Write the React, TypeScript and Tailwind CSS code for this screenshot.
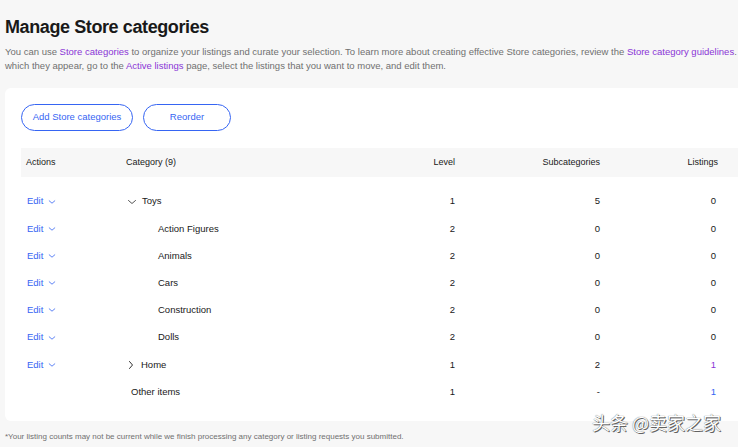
import type { ReactNode } from 'react';

type Row = {
  name: string;
  level: string;
  subs: string;
  listings: string;
  depth: 'parent' | 'child' | 'plain';
  open?: boolean;
  edit: boolean;
  listingsTone?: 'purple' | 'blue';
};

const rows: Row[] = [
  { name: 'Toys', level: '1', subs: '5', listings: '0', depth: 'parent', open: true, edit: true },
  { name: 'Action Figures', level: '2', subs: '0', listings: '0', depth: 'child', edit: true },
  { name: 'Animals', level: '2', subs: '0', listings: '0', depth: 'child', edit: true },
  { name: 'Cars', level: '2', subs: '0', listings: '0', depth: 'child', edit: true },
  { name: 'Construction', level: '2', subs: '0', listings: '0', depth: 'child', edit: true },
  { name: 'Dolls', level: '2', subs: '0', listings: '0', depth: 'child', edit: true },
  { name: 'Home', level: '1', subs: '2', listings: '1', depth: 'parent', open: false, edit: true, listingsTone: 'purple' },
  { name: 'Other items', level: '1', subs: '-', listings: '1', depth: 'plain', edit: false, listingsTone: 'blue' },
];

function Chevron({ dir, className }: { dir: 'down' | 'right'; className?: string }) {
  return (
    <svg viewBox="0 0 10 10" className={className} fill="none" stroke="currentColor" strokeWidth="1" strokeLinecap="round" strokeLinejoin="round">
      {dir === 'down' ? <polyline points="1.5,3.5 5,6.5 8.5,3.5" /> : <polyline points="3.5,1.5 6.5,5 3.5,8.5" />}
    </svg>
  );
}

function Link({ children }: { children: ReactNode }) {
  return <span className="text-[#8a35d6]">{children}</span>;
}

function CategoryCell({ row }: { row: Row }) {
  if (row.depth === 'child') {
    return <span className="pl-[37px]">{row.name}</span>;
  }
  if (row.depth === 'plain') {
    return <span className="pl-[10px]">{row.name}</span>;
  }
  return (
    <span className="flex items-center">
      {row.open ? (
        <Chevron dir="down" className="w-[10px] h-[10px] ml-[6px] mr-[5px] text-[#555]" />
      ) : (
        <Chevron dir="right" className="w-[10px] h-[10px] ml-[5px] mr-[5px] text-[#333]" />
      )}
      {row.name}
    </span>
  );
}

export default function App() {
  return (
    <div className="w-[738px] h-[447px] overflow-hidden bg-[#f7f7f7] relative font-['Liberation_Sans',Arial,sans-serif] text-[#191919]">
      <div className="w-[800px] pl-[5px] pt-[16px]">
        <h1 className="text-[18px] leading-[22px] font-bold tracking-[-0.4px]">Manage Store categories</h1>
        <p className="mt-[7px] text-[9.5px] leading-[14px] text-[#707070] whitespace-nowrap">
          <span className="block">
            You can use <Link>Store categories</Link> to organize your listings and curate your selection. To learn more about creating effective Store categories, review the <Link>Store category guidelines</Link>. To change the order of listings in
          </span>
          <span className="block">
            which they appear, go to the <Link>Active listings</Link> page, select the listings that you want to move, and edit them.
          </span>
        </p>

        <div className="mt-[15px] bg-white rounded-l-md pl-[16px] pt-[16px] pb-[15px]">
          <div className="flex gap-[10px]">
            <button className="w-[112px] h-[27px] rounded-full border border-[#3665f3] text-[#3665f3] text-[9.5px]">
              Add Store categories
            </button>
            <button className="w-[88px] h-[27px] rounded-full border border-[#3665f3] text-[#3665f3] text-[9.5px]">
              Reorder
            </button>
          </div>

          <div className="mt-[17px] h-[29px] bg-[#f7f7f7] grid grid-cols-[100px_239px_100px_145px_118px_1fr] items-center text-[9px] text-[#191919]">
            <span className="pl-[5px]">Actions</span>
            <span className="pl-[5px]">Category (9)</span>
            <span className="text-right pr-[5px]">Level</span>
            <span className="text-right pr-[5px]">Subcategories</span>
            <span className="text-right pr-[5px]">Listings</span>
            <span />
          </div>

          <div className="pt-[11px] text-[9.5px]">
            {rows.map((r) => (
              <div key={r.name} className="h-[27.2px] grid grid-cols-[100px_239px_100px_145px_118px_1fr] items-center">
                <span className="pl-[6px]">
                  {r.edit && (
                    <span className="flex items-center text-[#3665f3]">
                      Edit
                      <Chevron dir="down" className="w-[8px] h-[8px] ml-[5px]" />
                    </span>
                  )}
                </span>
                <CategoryCell row={r} />
                <span className="text-right pr-[5px]">{r.level}</span>
                <span className="text-right pr-[5px]">{r.subs}</span>
                <span
                  className={
                    r.listingsTone === 'purple'
                      ? 'text-right pr-[7px] text-[#8a35d6]'
                      : r.listingsTone === 'blue'
                        ? 'text-right pr-[7px] text-[#3665f3]'
                        : 'text-right pr-[7px]'
                  }
                >
                  {r.listings}
                </span>
                <span />
              </div>
            ))}
          </div>
        </div>

        <p className="mt-[10px] text-[8px] leading-[12px] text-[#707070]">
          *Your listing counts may not be current while we finish processing any category or listing requests you submitted.
        </p>
      </div>

      <div className="absolute left-[592px] top-[411px] text-[18px] leading-[22px] text-white font-['Noto_Sans_CJK_SC',sans-serif] [text-shadow:0_0_1px_#444,1px_1px_0_#666]">
        头条 @卖家之家
      </div>
    </div>
  );
}
